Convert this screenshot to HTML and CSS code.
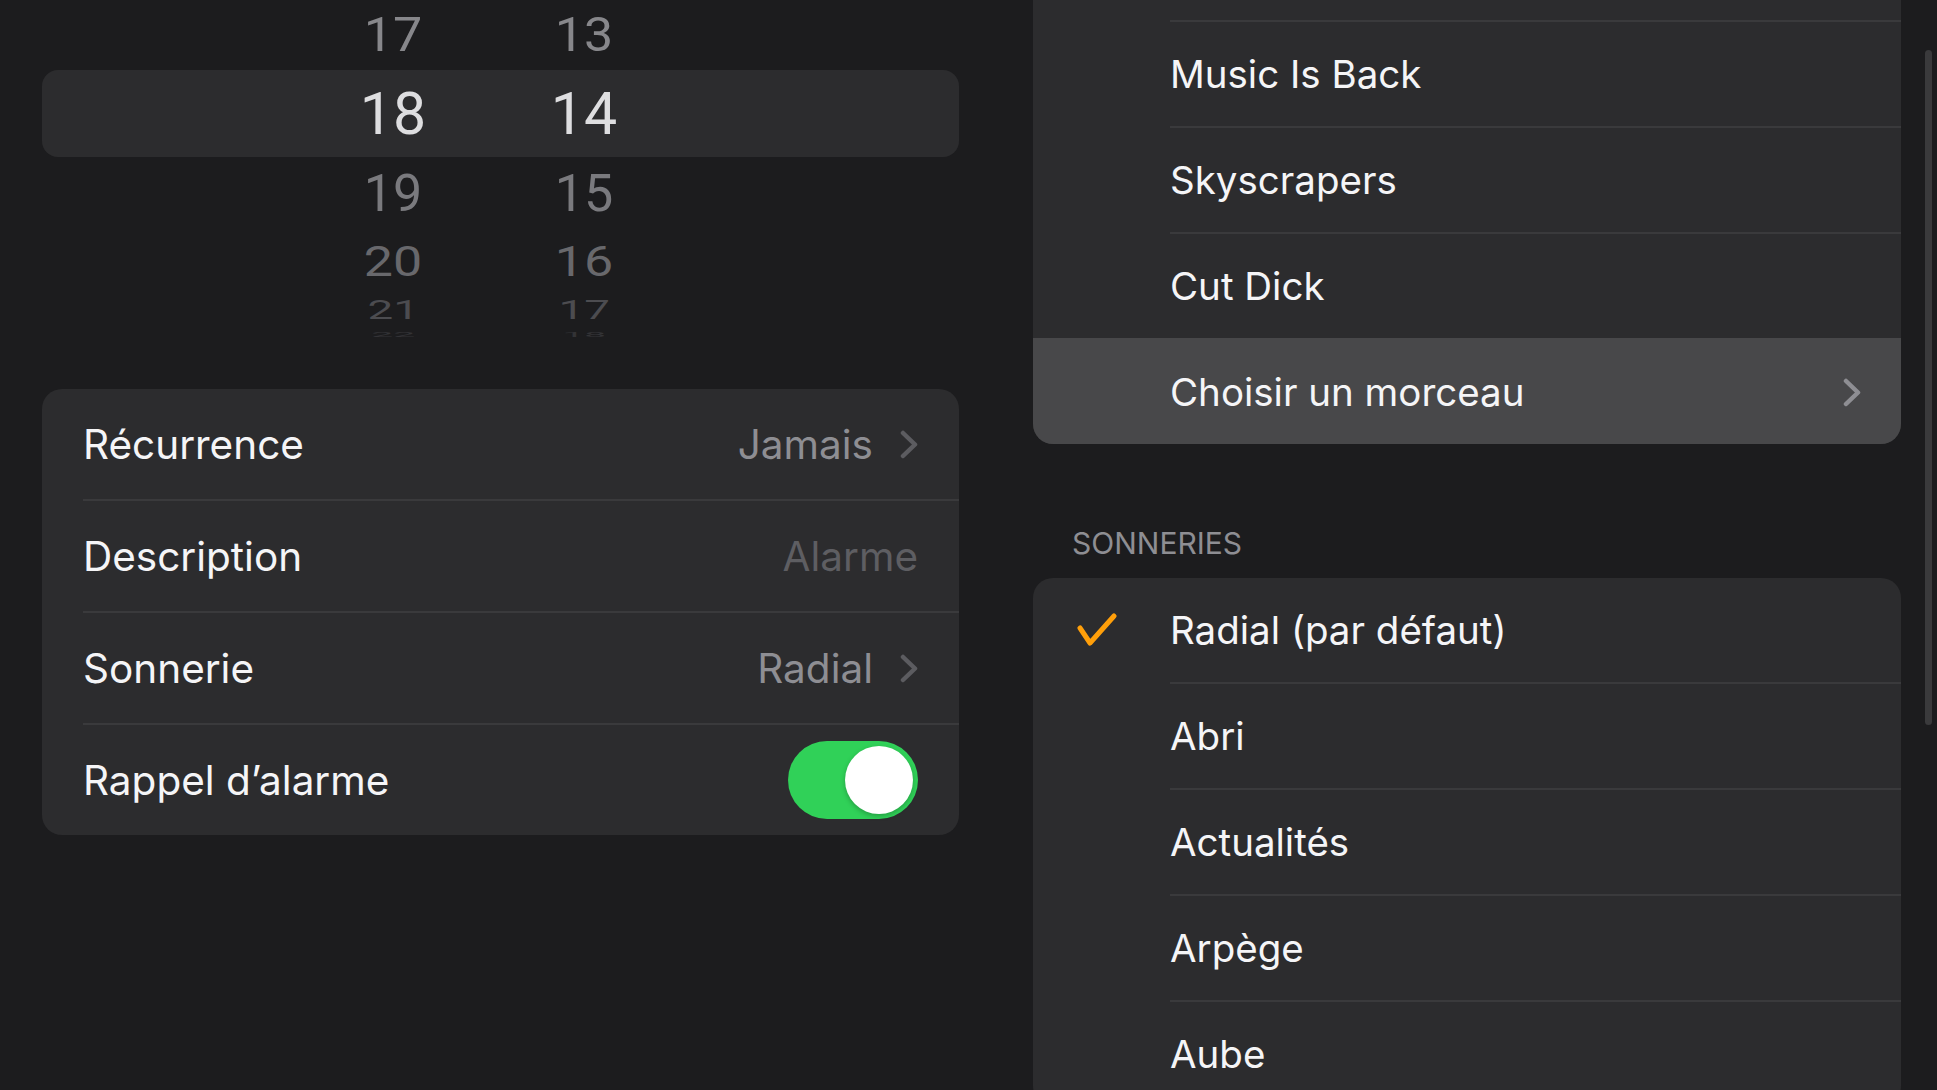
FILE: index.html
```html
<!DOCTYPE html>
<html lang="fr">
<head>
  <meta charset="UTF-8">
  <meta name="viewport" content="width=device-width, initial-scale=1.0">
  <title>Modifier l'alarme</title>
<link rel="stylesheet" href="styles.css">
</head>
<body>

  <div class="ecran">

    <!-- colonne de gauche : roue horaire + réglages -->
    <section class="volet-alarme">
      <div class="roue">
        <div class="roue-ligne r-17"><span>17</span><span>13</span></div>
        <div class="roue-ligne choisi"><span>18</span><span>14</span></div>
        <div class="roue-ligne r-19"><span>19</span><span>15</span></div>
        <div class="roue-ligne r-20"><span>20</span><span>16</span></div>
        <div class="roue-ligne r-21"><span>21</span><span>17</span></div>
        <div class="roue-ligne r-22"><span>22</span><span>18</span></div>
      </div>

      <div class="carte reglages">
        <div class="ligne">
          <div class="ligne-corps">
            <span class="libelle">Récurrence</span>
            <span class="valeur">Jamais</span>
            <svg class="chevron" width="18" height="29" viewBox="0 0 18 29"><path d="M3 3 L15 14.5 L3 26" /></svg>
          </div>
        </div>
        <div class="ligne">
          <div class="ligne-corps">
            <span class="libelle">Description</span>
            <span class="valeur vide">Alarme</span>
          </div>
        </div>
        <div class="ligne">
          <div class="ligne-corps">
            <span class="libelle">Sonnerie</span>
            <span class="valeur">Radial</span>
            <svg class="chevron" width="18" height="29" viewBox="0 0 18 29"><path d="M3 3 L15 14.5 L3 26" /></svg>
          </div>
        </div>
        <div class="ligne">
          <div class="ligne-corps">
            <span class="libelle">Rappel d’alarme</span>
            <span class="interrupteur"></span>
          </div>
        </div>
      </div>
    </section>

    <!-- colonne de droite : choix du son -->
    <section class="volet-sons">
      <div class="carte liste morceaux">
        <div class="ligne bout"><span class="marge"></span><div class="ligne-corps"></div></div>
        <div class="ligne"><span class="marge"></span><div class="ligne-corps">Music Is Back</div></div>
        <div class="ligne"><span class="marge"></span><div class="ligne-corps">Skyscrapers</div></div>
        <div class="ligne"><span class="marge"></span><div class="ligne-corps">Cut Dick</div></div>
        <div class="ligne active">
          <span class="marge"></span>
          <div class="ligne-corps">
            <span class="libelle">Choisir un morceau</span>
            <svg class="chevron" width="18" height="29" viewBox="0 0 18 29"><path d="M3 3 L15 14.5 L3 26" /></svg>
          </div>
        </div>
      </div>

      <h2 class="entete">SONNERIES</h2>

      <div class="carte liste sonneries">
        <div class="ligne">
          <span class="marge">
            <svg class="coche" width="42" height="34" viewBox="0 0 42 34"><path d="M4 15 L14 30 L38 3" /></svg>
          </span>
          <div class="ligne-corps">Radial (par défaut)</div>
        </div>
        <div class="ligne"><span class="marge"></span><div class="ligne-corps">Abri</div></div>
        <div class="ligne"><span class="marge"></span><div class="ligne-corps">Actualités</div></div>
        <div class="ligne"><span class="marge"></span><div class="ligne-corps">Arpège</div></div>
        <div class="ligne"><span class="marge"></span><div class="ligne-corps">Aube</div></div>
      </div>
    </section>

    <div class="ascenseur"></div>
  </div>

</body>
</html>
```

FILE: styles.css
```css
body {
  margin: 0;
  background-color: #1c1c1e;
  color: #f5f5f7;
  font-family: Inter, "Liberation Sans", sans-serif;
  overflow: hidden;
}

.ecran {
  position: relative;
  display: flex;
  gap: 74px;
  padding-left: 42px;
  height: 1090px;
  overflow: hidden;
}

.volet-alarme {
  flex: none;
  width: 917px;
}

.volet-sons {
  flex: none;
  width: 868px;
}

/* Roue des heures / minutes */
.roue {
  display: flex;
  flex-direction: column;
}

.roue-ligne {
  display: grid;
  grid-template-columns: 120px 120px;
  column-gap: 71px;
  padding-left: 291px;
  align-items: center;
  justify-items: center;
  font-family: Roboto, "Liberation Sans", sans-serif;
  font-size: 52px;
  line-height: 1;
}

.roue-ligne span {
  display: block;
}

.r-17 {
  height: 70px;
  color: #87878b;
}

.r-17 span {
  transform: scaleY(0.94);
}

.choisi {
  height: 87px;
  background-color: #2c2c2e;
  border-radius: 16px;
  font-size: 59px;
  color: #dedee0;
}

.r-19 {
  height: 73px;
  color: #7a7a7e;
}

.r-20 {
  height: 64px;
  color: #68686c;
}

.r-20 span {
  transform: scaleY(0.8);
}

.r-21 {
  height: 34px;
  line-height: 34px;
  color: #4c4c50;
}

.r-21 span {
  transform: scale(0.88, 0.48);
}

.r-22 {
  height: 14px;
  line-height: 14px;
  color: #333336;
}

.r-22 span {
  transform: scale(0.75, 0.14);
}

/* Cartes et lignes */
.carte {
  background-color: #2c2c2e;
  border-radius: 20px;
  overflow: hidden;
}

.reglages {
  margin-top: 47px;
}

.ligne {
  display: flex;
  padding-left: 41px;
}

.ligne-corps {
  flex: 1;
  display: flex;
  align-items: center;
  height: 110px;
  padding-right: 41px;
  font-size: 40.5px;
}

.ligne + .ligne .ligne-corps {
  border-top: 2px solid #3a3a3c;
}

.valeur {
  margin-left: auto;
  color: #8e8e93;
}

.valeur.vide {
  color: #5e5e62;
}

.chevron {
  flex: none;
  margin-left: 27px;
}

.chevron path {
  fill: none;
  stroke: #5c5c60;
  stroke-width: 4.5;
  stroke-linecap: round;
  stroke-linejoin: round;
}

.interrupteur {
  margin-left: auto;
  width: 130px;
  height: 78px;
  box-sizing: border-box;
  padding: 5px;
  border-radius: 39px;
  background-color: #30d158;
  display: flex;
  justify-content: flex-end;
}

.interrupteur::after {
  content: "";
  width: 68px;
  height: 68px;
  border-radius: 50%;
  background-color: #fff;
  box-shadow: 0 2px 5px rgba(0, 0, 0, 0.25);
}

/* Listes de sons (colonne de droite) */
.liste .ligne {
  padding-left: 0;
}

.marge {
  flex: none;
  width: 137px;
  display: flex;
  align-items: center;
}

.liste .ligne-corps {
  height: 104px;
  padding-right: 40px;
  font-size: 38.5px;
}

.morceaux {
  border-radius: 0 0 20px 20px;
}

.morceaux .bout .ligne-corps {
  height: 20px;
}

.ligne.active {
  background-color: #48484a;
}

.ligne.active .ligne-corps {
  border-top-color: transparent;
}

.ligne.active .chevron {
  margin-left: auto;
}

.ligne.active .chevron path {
  stroke: #8e8e93;
}

.entete {
  margin: 84px 0 20px 0;
  padding-left: 39px;
  font-size: 30px;
  font-weight: 400;
  line-height: 1;
  color: #8e8e93;
}

.coche {
  margin-left: 43px;
}

.coche path {
  fill: none;
  stroke: #ff9f0a;
  stroke-width: 5;
  stroke-linecap: round;
  stroke-linejoin: round;
}

/* Indicateur de défilement */
.ascenseur {
  position: absolute;
  top: 50px;
  right: 5px;
  width: 7px;
  height: 675px;
  border-radius: 4px;
  background-color: #3a3a3c;
}
```
